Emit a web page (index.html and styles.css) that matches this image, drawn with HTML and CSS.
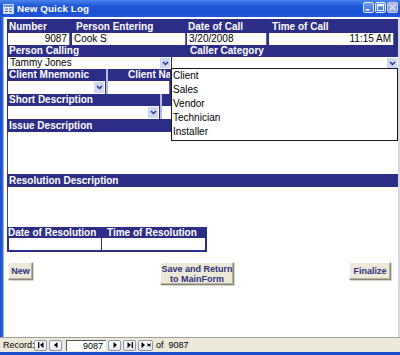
FILE: index.html
```html
<!DOCTYPE html>
<html>
<head>
<meta charset="utf-8">
<link rel="stylesheet" href="styles.css">
</head>
<body>
<div class="win">
  <div class="titlebar">
    <svg class="ticon" width="11" height="10" viewBox="0 0 11 10"><rect x="0.5" y="0.5" width="10" height="9" fill="#e8eefc" stroke="#c8d4f4"/><rect x="1" y="1" width="9" height="2" fill="#6a8fe0"/><rect x="2" y="4.5" width="3" height="1" fill="#3a5fc0"/><rect x="6" y="4.5" width="3" height="1" fill="#3a5fc0"/><rect x="2" y="7" width="3" height="1" fill="#3a5fc0"/><rect x="6" y="7" width="3" height="1" fill="#3a5fc0"/></svg>
    <span class="ttext">New Quick Log</span>
    <div class="tbtns">
      <span class="tb"><svg width="9" height="9" viewBox="0 0 9 9"><rect x="1.5" y="6" width="4" height="1.6" fill="#fff"/></svg></span>
      <span class="tb"><svg width="9" height="9" viewBox="0 0 9 9"><rect x="1.5" y="1.5" width="6" height="6" fill="none" stroke="#fff" stroke-width="1"/><rect x="1.5" y="1.5" width="6" height="1.6" fill="#fff"/></svg></span>
      <span class="tb tb-close"><svg width="9" height="9" viewBox="0 0 9 9"><path d="M1.5 1.5 L7.5 7.5 M7.5 1.5 L1.5 7.5" stroke="#dfe4f4" stroke-width="1.4"/></svg></span>
    </div>
  </div>

  <div class="main">
    <div class="frame-l"></div>
    <div class="client">
      <div class="top">
        <div class="g1 lrow h14">
          <span class="lbl">Number</span>
          <span class="lbl pl4">Person Entering</span>
          <span class="lbl">Date of Call</span>
          <span class="lbl pl3">Time of Call</span>
        </div>
        <div class="g1 vrow h12">
          <span class="vbox right mr2">9087</span>
          <span class="vbox mr1">Cook S</span>
          <span class="vbox mr2">3/20/2008</span>
          <span class="vbox right mr4">11:15 AM</span>
        </div>
        <div class="g2 lrow h12">
          <span class="lbl">Person Calling</span>
          <span class="lbl pl18">Caller Category</span>
        </div>
        <div class="g2 vrow h12">
          <span class="combo mr1"><span class="ctext">Tammy Jones</span><span class="arr"><svg width="9" height="9" viewBox="0 0 9 9"><path d="M2 3 L4.5 5.5 L7 3" fill="none" stroke="#2b3590" stroke-width="1.5"/></svg></span></span>
          <span class="combo"><span class="ctext"></span><span class="arr"><svg width="9" height="9" viewBox="0 0 9 9"><path d="M2 3 L4.5 5.5 L7 3" fill="none" stroke="#2b3590" stroke-width="1.5"/></svg></span></span>
        </div>
        <div class="g3 lrow h12">
          <span class="lbl">Client Mnemonic</span>
          <span class="vline"></span>
          <span class="lbl pl20">Client Name</span>
        </div>
        <div class="g3 vrow h13">
          <span class="combo mr1"><span class="ctext"></span><span class="arr"><svg width="9" height="9" viewBox="0 0 9 9"><path d="M2 3 L4.5 5.5 L7 3" fill="none" stroke="#2b3590" stroke-width="1.5"/></svg></span></span>
          <span class="vline"></span>
          <span class="vbox"></span>
        </div>
        <div class="g4 lrow h12">
          <span class="lbl">Short Description</span>
          <span class="vline"></span>
          <span></span>
        </div>
        <div class="g4 vrow h13">
          <span class="combo mr1"><span class="ctext"></span><span class="arr"><svg width="9" height="9" viewBox="0 0 9 9"><path d="M2 3 L4.5 5.5 L7 3" fill="none" stroke="#2b3590" stroke-width="1.5"/></svg></span></span>
          <span class="vline"></span>
          <span class="smallbox"></span>
        </div>
      </div>
      <div class="band">Issue Description</div>
      <div class="memo m42"></div>
      <div class="band">Resolution Description</div>
      <div class="memo m40"></div>
      <div class="res">
        <div class="reshead">
          <span class="lbl">Date of Resolution</span>
          <span class="lbl pl5">Time of Resolution</span>
        </div>
        <div class="resvals">
          <span class="rcell"></span>
          <span class="rcell2"></span>
        </div>
      </div>
      <div class="btnrow">
        <button class="btn b-new">New</button>
        <button class="btn b-save">Save and Return<br>to MainForm</button>
        <button class="btn b-fin">Finalize</button>
      </div>

      <div class="dropdown">
        <div class="item">Client</div>
        <div class="item">Sales</div>
        <div class="item">Vendor</div>
        <div class="item">Technician</div>
        <div class="item">Installer</div>
      </div>
    </div>
    <div class="frame-r"></div>
  </div>

  <div class="status">
    <span class="rec">Record:</span>
    <span class="nb"><svg width="10" height="8" viewBox="0 0 10 8"><rect x="2" y="1" width="1.3" height="6" fill="#000"/><path d="M7.5 1 L4 4 L7.5 7 Z" fill="#000"/></svg></span>
    <span class="nb"><svg width="10" height="8" viewBox="0 0 10 8"><path d="M6.5 1 L3 4 L6.5 7 Z" fill="#000"/></svg></span>
    <span class="navbox">9087</span>
    <span class="nb"><svg width="10" height="8" viewBox="0 0 10 8"><path d="M3.5 1 L7 4 L3.5 7 Z" fill="#000"/></svg></span>
    <span class="nb"><svg width="10" height="8" viewBox="0 0 10 8"><path d="M2.5 1 L6 4 L2.5 7 Z" fill="#000"/><rect x="6.7" y="1" width="1.3" height="6" fill="#000"/></svg></span>
    <span class="nb nb5"><svg width="12" height="8" viewBox="0 0 12 8"><path d="M1.5 1 L5 4 L1.5 7 Z" fill="#000"/><path d="M7 4 H11 M7.5 2.5 L10.5 5.5 M10.5 2.5 L7.5 5.5" stroke="#000" stroke-width="0.9" fill="none"/></svg></span>
    <span class="of">of&nbsp;&nbsp;9087</span>
  </div>
  <div class="frame-b"></div>
</div>
</body>
</html>
```
FILE: styles.css
```css
* { box-sizing: border-box; margin: 0; padding: 0; }
html, body { width: 400px; height: 355px; overflow: hidden; }
body { font-family: "Liberation Sans", Arial, sans-serif; background: #fff; }

.win { display: flex; flex-direction: column; width: 400px; height: 355px; }

/* title bar */
.titlebar {
  height: 17px; flex: none; display: flex; align-items: center;
  background: linear-gradient(#4a84ee 0%, #2058d8 35%, #1a50d2 70%, #1e58dc 100%);
  color: #fff; padding-left: 3px;
}
.ticon { display: block; }
.ttext { font-weight: bold; font-size: 9.8px; margin-left: 3px; letter-spacing: 0.1px; }
.tbtns { margin-left: auto; display: flex; gap: 1px; padding-right: 2px; align-self: flex-start; padding-top: 2px; }
.tb {
  width: 11px; height: 11px; border: 1px solid #e6ecfa; border-radius: 2px;
  background: linear-gradient(#6c9cf0, #3c6ee0);
  display: flex; align-items: center; justify-content: center;
}
.tb svg { display: block; }
.tb-close { background: linear-gradient(#a3b2e0, #8d9fd8); border-color: #c8d0ee; }

/* main area */
.main { flex: 1; display: flex; min-height: 0; }
.frame-l { width: 4px; flex: none; background: linear-gradient(90deg, #1a4ccc, #2a5ed8 60%, #c8d2ee); }
.frame-r { width: 2px; flex: none; background: #d6dae8; }
.client { flex: 1; position: relative; background: #fff; padding-top: 2px; }

.top { margin-left: 3px; background: #2c2d86; padding-left: 1px; }
.lrow, .vrow { display: grid; }
.g1 { grid-template-columns: 64px 115px 82px 1fr; }
.g2 { grid-template-columns: 164px 1fr; }
.g3 { grid-template-columns: 98px 2px 62px 1fr; }
.g4 { grid-template-columns: 152px 2px 9px 1fr; }
.h14 { height: 14px; }
.h12 { height: 12px; }
.h13 { height: 13px; }

.lbl { color: #fff; font-weight: bold; font-size: 10px; line-height: 12px; padding-left: 1px; white-space: nowrap; overflow: hidden; }
.h14 .lbl { line-height: 14px; padding-top: 1px; }
.pl3 { padding-left: 3px; }
.pl4 { padding-left: 4px; }
.pl5 { padding-left: 5px; }
.pl18 { padding-left: 18px; }
.pl20 { padding-left: 20px; }
.mr1 { margin-right: 1px; }
.mr2 { margin-right: 2px; }
.mr4 { margin-right: 4px; }

.vbox {
  background: #fff; color: #000; font-size: 10px; line-height: 12px;
  padding: 0 2px; border-right: 1px solid #6a6a78; white-space: nowrap;
}
.right { text-align: right; }

.combo { background: #fff; display: flex; align-items: stretch; }
.ctext { flex: 1; font-size: 10px; line-height: 12px; color: #000; padding-left: 2px; }
.arr { width: 10px; flex: none; background: #cdd7f2; display: flex; align-items: center; justify-content: center; margin: 1px 1px 1px 0; }
.arr svg { display: block; }
.vline { background: #b9bbdc; }
.smallbox { background: #fff; }

.band {
  margin-left: 3px; background: #2c2d86; color: #fff; font-weight: bold;
  font-size: 10px; line-height: 13px; height: 13px; padding-left: 2px;
}
.memo { margin-left: 3px; border-left: 1px solid #4a4a5a; background: #fff; }
.m42 { height: 42px; }
.m40 { height: 40px; }

.res { margin-left: 3px; width: 200px; }
.reshead { display: grid; grid-template-columns: 95px 1fr; background: #2c2d86; height: 11px; }
.reshead .lbl { line-height: 11px; }
.resvals { display: flex; height: 14px; border: 2px solid #2c2d86; border-top: 0; background: #fff; }
.rcell { width: 93px; border-right: 1px solid #333; }
.rcell2 { flex: 1; }

/* buttons */
.btnrow { display: flex; align-items: flex-start; margin-top: 10px; }
.btn {
  background: #ece9d8; font-family: "Liberation Sans", Arial, sans-serif;
  font-weight: bold; font-size: 9px; line-height: 10px; color: #2e2f7e;
  border: 1px solid; border-color: #fff #8a877a #8a877a #fff;
  box-shadow: inset -1px -1px 0 #b8b4a4, 1px 1px 0 #d8d6cc;
}
.b-new { width: 25px; height: 18px; margin-left: 4px; }
.b-save { width: 74px; height: 23px; margin-left: 127px; }
.b-fin { width: 42px; height: 18px; margin-left: 115px; }

/* dropdown list */
.dropdown {
  position: absolute; left: 167px; top: 51px; width: 227px; height: 73px;
  background: #fff; border: 1px solid #1a1a1a; padding-top: 0;
}
.item { font-size: 10px; line-height: 14px; height: 14px; color: #000; padding-left: 1px; }

/* status bar */
.status {
  height: 15px; flex: none; border-top: 1px solid #a2a09a; background: #ece9d8;
  display: flex; align-items: center; font-size: 9px; color: #000; padding-left: 3px;
}
.rec { width: 31px; }
.nb {
  width: 13px; height: 11px; border: 1px solid #8a98b2; border-radius: 2px;
  background: linear-gradient(#ffffff, #e6e6ee); margin-right: 2px;
  display: flex; align-items: center; justify-content: center;
}
.nb svg { display: block; }
.nb5 { width: 15px; }
.navbox {
  width: 40px; height: 11px; background: #fff; text-align: right; padding-right: 3px;
  line-height: 10px; border-left: 1px solid #555; border-top: 1px solid #555;
  margin: 0 2px 0 2px;
}
.of { margin-left: 1px; }
.frame-b { height: 3px; flex: none; background: #1a4ccc; }
```
